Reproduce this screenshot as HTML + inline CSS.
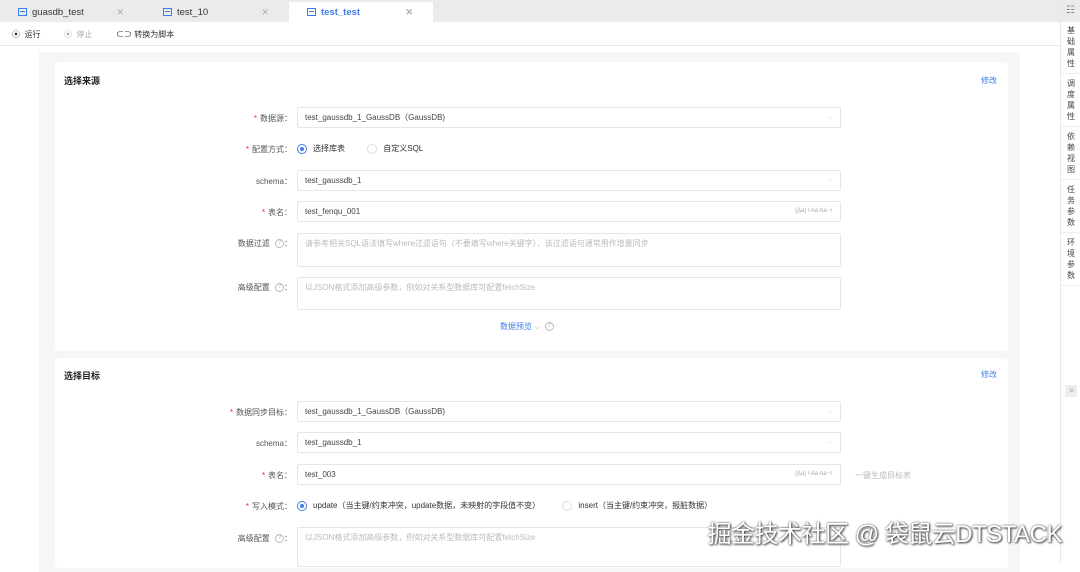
<!DOCTYPE html>
<html><head><meta charset="utf-8"><style>
*{box-sizing:border-box;margin:0;padding:0}
body{width:1080px;height:563px;overflow:hidden;background:#fff;font-family:"Liberation Sans","Noto Sans CJK SC",sans-serif;font-size:8px;color:#333;position:relative}
.abs{position:absolute}
.tabs{left:0;top:0;width:1060px;height:22px;background:#ebebed}
.tab{top:2px;height:20px;width:144px;font-size:9.5px;color:#333;display:flex;align-items:center;padding-left:18px}
.tab .ic{width:9px;height:8px;border:1px solid #3f7de8;margin-right:5px;position:relative}
.tab .ic:after{content:"";position:absolute;left:1px;right:1px;top:2px;height:1px;background:#3f7de8}
.tab .x{position:absolute;right:20px;color:#aaa;font-size:9px}
.tb{top:22px;left:0;width:1060px;height:24px;border-bottom:1px solid #e8e8e8;background:#fff}
.tb span{position:absolute;top:7px;font-size:8px}
.side{left:1060px;top:0;width:20px;height:563px;background:#fff;border-left:1px solid #e8e8e8}
.side .top{height:22px;background:#ebebed}
.side div.v{width:20px;text-align:center;font-size:8px;line-height:11px;padding:4px 0;border-bottom:1px solid #eee;color:#444}
.panel{left:39px;top:52px;width:981px;height:520px;background:#f6f6f7}
.card{background:#fff;left:55px;width:953px;border-radius:4px}
.title{font-size:9px;color:#222;font-weight:bold}
.edit{color:#3f7de8;font-size:8px}
.lab{right:788px;font-size:8px;color:#555;text-align:right;white-space:nowrap}
.lab b{color:#f5222d;font-weight:normal;margin-right:3px}
.inp{left:297px;width:544px;height:21px;border:1px solid #e6e6e6;border-radius:2px;padding-left:7px;line-height:19px;font-size:8px;color:#444;background:#fff}
.ph{color:#bbb}
.q{display:inline-block;width:9px;height:9px;border:1px solid #bbb;border-radius:50%;font-size:6px;line-height:7px;text-align:center;color:#aaa;vertical-align:middle;margin-left:3px}
.rad{display:inline-block;width:10px;height:10px;border:1px solid #3f7de8;border-radius:50%;vertical-align:middle;position:relative;margin-right:6px}
.rad.on:after{content:"";position:absolute;left:2px;top:2px;width:4px;height:4px;border-radius:50%;background:#3f7de8}
.rad.off{border-color:#ddd}
.arr{position:absolute;right:8px;top:0;color:#ccc;font-size:7px}
.wm{right:18px;top:514px;font-size:24px;color:#fff;text-shadow:0 0 2px #555,1px 1px 2px #333;white-space:nowrap;letter-spacing:-0.5px}
</style></head><body>
<div class="abs tabs"></div>
<div class="abs tab" style="left:0">  <span class="ic"></span>guasdb_test<span class="x">✕</span></div>
<div class="abs tab" style="left:145px"><span class="ic"></span>test_10<span class="x">✕</span></div>
<div class="abs tab" style="left:289px;background:#fff;color:#3f7de8;font-weight:bold"><span class="ic"></span>test_test<span class="x">✕</span></div>
<div class="abs tb">
<span style="left:12px">⦿ &nbsp;运行</span>
<span style="left:64px;color:#aaa">⦿ &nbsp;停止</span>
<span style="left:116px">⊂⊃ 转换为脚本</span>
</div>
<div class="abs side"><div class="top" style="text-align:center;color:#888;font-size:10px;line-height:22px">☷</div>
<div class="v" style="padding-top:3px">基<br>础<br>属<br>性</div><div class="v">调<br>度<br>属<br>性</div><div class="v">依<br>赖<br>视<br>图</div><div class="v">任<br>务<br>参<br>数</div><div class="v">环<br>境<br>参<br>数</div>
<div style="position:absolute;top:385px;left:4px;width:12px;height:12px;background:#eee;font-size:6px;color:#999;text-align:center;line-height:12px">⇲</div></div>
<div class="abs panel"></div>
<div class="abs card" style="top:62px;height:289px"></div>
<div class="abs card" style="top:358px;height:210px"></div>
<div class="abs title" style="left:64px;top:74px">选择来源</div>
<div class="abs edit" style="left:981px;top:75px">修改</div>

<div class="abs lab" style="top:113px"><b>*</b>数据源：</div>
<div class="abs inp" style="top:107px">test_gaussdb_1_GaussDB（GaussDB)<span class="arr">⌵</span></div>
<div class="abs lab" style="top:144px"><b>*</b>配置方式：</div>
<div class="abs" style="left:297px;top:143px;font-size:8px"><span class="rad on"></span>选择库表 <span style="margin-left:20px" class="rad off"></span>自定义SQL</div>
<div class="abs lab" style="top:176px">schema：</div>
<div class="abs inp" style="top:170px">test_gaussdb_1<span class="arr">⌵</span></div>
<div class="abs lab" style="top:207px"><b>*</b>表名：</div>
<div class="abs inp" style="top:201px">test_fenqu_001<span class="arr" style="font-size:6px;color:#aaa">[A̲a] ⊦Aa Aa⊣</span></div>
<div class="abs lab" style="top:238px">数据过滤 <span class="q">?</span>：</div>
<div class="abs inp ph" style="top:233px;height:34px">请参考相关SQL语法填写where过滤语句（不要填写where关键字），该过滤语句通常用作增量同步</div>
<div class="abs lab" style="top:282px">高级配置 <span class="q">?</span>：</div>
<div class="abs inp ph" style="top:277px;height:33px">以JSON格式添加高级参数，例如对关系型数据库可配置fetchSize</div>
<div class="abs" style="left:500px;top:321px;color:#3f7de8">数据预览 <span style="color:#aaa">⌵ &nbsp;<span class="q" style="margin:0">?</span></span></div>

<div class="abs title" style="left:64px;top:369px">选择目标</div>
<div class="abs edit" style="left:981px;top:369px">修改</div>
<div class="abs lab" style="top:407px"><b>*</b>数据同步目标：</div>
<div class="abs inp" style="top:401px">test_gaussdb_1_GaussDB（GaussDB)<span class="arr">⌵</span></div>
<div class="abs lab" style="top:438px">schema：</div>
<div class="abs inp" style="top:432px">test_gaussdb_1<span class="arr">⌵</span></div>
<div class="abs lab" style="top:470px"><b>*</b>表名：</div>
<div class="abs inp" style="top:464px">test_003<span class="arr" style="font-size:6px;color:#aaa">[A̲a] ⊦Aa Aa⊣</span></div>
<div class="abs" style="left:855px;top:470px;color:#bbb">一键生成目标表</div>
<div class="abs lab" style="top:501px"><b>*</b>写入模式：</div>
<div class="abs" style="left:297px;top:500px"><span class="rad on"></span>update（当主键/约束冲突，update数据，未映射的字段值不变） <span style="margin-left:20px" class="rad off"></span>insert（当主键/约束冲突，报脏数据）</div>
<div class="abs lab" style="top:533px">高级配置 <span class="q">?</span>：</div>
<div class="abs inp ph" style="top:527px;height:40px">以JSON格式添加高级参数，例如对关系型数据库可配置fetchSize</div>
<div class="abs wm">掘金技术社区 @ 袋鼠云DTSTACK</div>
</body></html>
